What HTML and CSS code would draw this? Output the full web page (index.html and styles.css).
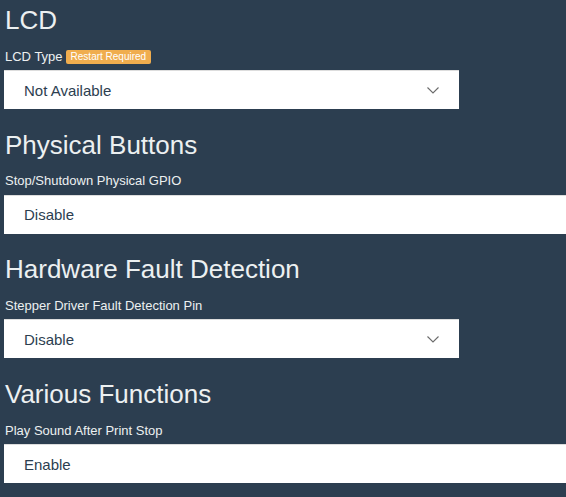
FILE: index.html
```html
<!DOCTYPE html>
<html>
<head>
<meta charset="utf-8">
<link rel="stylesheet" href="styles.css">
</head>
<body>
<div class="page">
  <section class="section">
    <h2 class="heading">LCD</h2>
    <div class="label-row"><span class="label">LCD Type</span><span class="badge">Restart Required</span></div>
    <div class="field select"><span class="value">Not Available</span>
      <svg class="chevron" width="12" height="7" viewBox="0 0 12 7"><path d="M0.5 0.5 L6 6 L11.5 0.5" fill="none" stroke="#6b6b6b" stroke-width="1.1"/></svg>
    </div>
  </section>
  <section class="section">
    <h2 class="heading">Physical Buttons</h2>
    <div class="label-row"><span class="label">Stop/Shutdown Physical GPIO</span></div>
    <div class="field wide"><span class="value">Disable</span></div>
  </section>
  <section class="section">
    <h2 class="heading">Hardware Fault Detection</h2>
    <div class="label-row"><span class="label">Stepper Driver Fault Detection Pin</span></div>
    <div class="field select"><span class="value">Disable</span>
      <svg class="chevron" width="12" height="7" viewBox="0 0 12 7"><path d="M0.5 0.5 L6 6 L11.5 0.5" fill="none" stroke="#6b6b6b" stroke-width="1.1"/></svg>
    </div>
  </section>
  <section class="section">
    <h2 class="heading">Various Functions</h2>
    <div class="label-row"><span class="label">Play Sound After Print Stop</span></div>
    <div class="field wide"><span class="value">Enable</span></div>
  </section>
</div>
</body>
</html>
```

FILE: styles.css
```css
html, body {
  margin: 0;
  padding: 0;
  background: #2c3e50;
}
body {
  font-family: "Liberation Sans", Arial, sans-serif;
  color: #ecf0f1;
}
.page {
  padding-left: 4px;
}
.section {
  padding: 5px 0 15.7px 0;
}
.heading {
  margin: 0 0 0 1px;
  font-size: 26px;
  line-height: 30px;
  font-weight: normal;
  color: #ecf0f1;
}
.label-row {
  display: flex;
  align-items: center;
  gap: 3px;
  height: 16px;
  margin: 13.5px 0 0 1px;
}
.label {
  font-size: 13px;
  line-height: 16px;
}
.badge {
  background: #f0ad4e;
  color: #fff;
  font-size: 10px;
  line-height: 14px;
  height: 14px;
  padding: 0 5px;
  border-radius: 2px;
}
.field {
  margin-top: 5.5px;
  height: 39px;
  box-sizing: border-box;
  background: #fff;
  border-top: 1px solid #dddddd;
  display: flex;
  align-items: center;
  padding: 0 20px;
  color: #2c3e50;
  font-size: 15px;
}
.select {
  width: 455px;
  justify-content: space-between;
}
.wide {
  width: 100%;
}
.chevron {
  display: block;
  margin-top: 1px;
}
```
